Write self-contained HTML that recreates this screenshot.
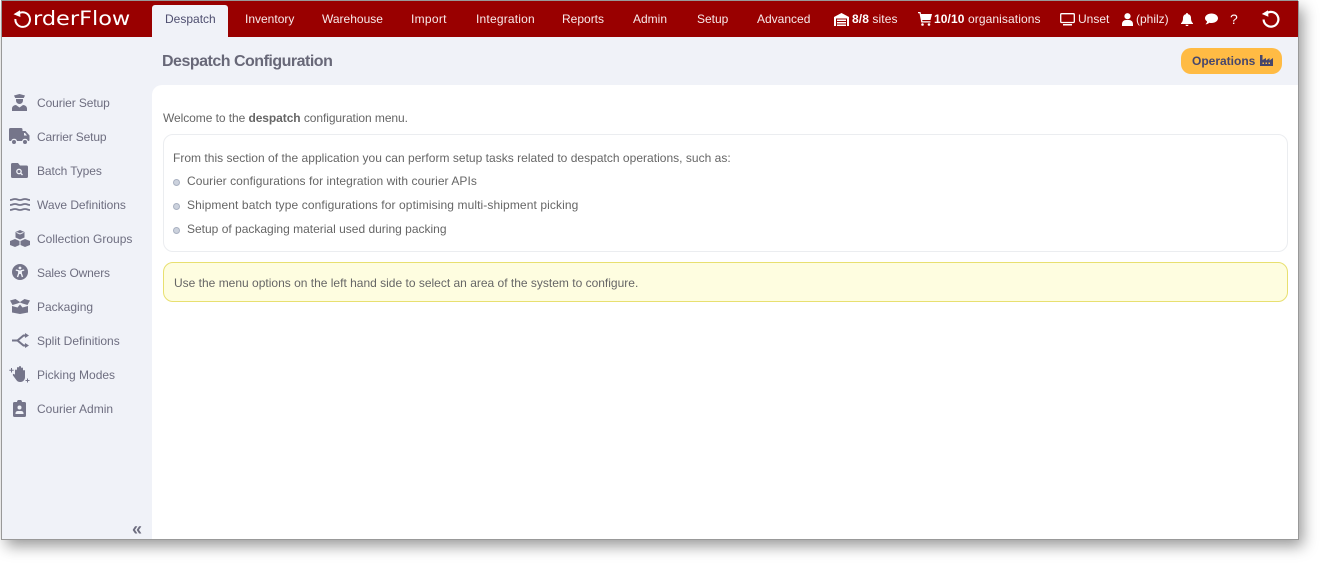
<!DOCTYPE html>
<html>
<head>
<meta charset="utf-8">
<style>
html,body{margin:0;padding:0;width:1324px;height:568px;background:#fff;overflow:hidden;font-family:"Liberation Sans",sans-serif}
#win{position:absolute;left:1px;top:1px;width:1297px;height:538px;background:#f0f2f8;box-shadow:0 -1px 0 0 #999,1px 0 0 0 #999,1px 1px 0 0 #999,0 1px 0 0 #999,5px 7px 14px 0 rgba(0,0,0,.4);overflow:hidden}
#lb{position:absolute;left:0;top:0;width:1px;height:538px;background:#999;z-index:5}
.t{position:absolute;white-space:nowrap;font-size:12px;line-height:16px}
#head{position:absolute;left:0;top:0;width:1297px;height:36px;background:#990000}
.n{color:#f8eaea;top:10px}
#tab{position:absolute;left:151px;top:4px;width:76px;height:32px;background:#f0f2f8;border-radius:3px 3px 0 0}
.s{color:#6e6e80;left:36px}
svg{position:absolute;display:block}
.i{fill:#75758a}
#main{position:absolute;left:151px;top:84px;width:1146px;height:454px;background:#fff;border-radius:10px 0 0 0}
.c{color:#666}
.dot{position:absolute;left:172px;width:5px;height:5px;border-radius:50%;background:#ccd2dd;border:1px solid #a9b1c1;box-sizing:content-box}
</style>
</head>
<body>
<div id="win">
<div id="lb"></div>
<div id="head"></div>
<svg style="left:12px;top:8px" width="20" height="19" viewBox="0 0 20 19"><path d="M5.500 4.600A7.300 7.300 0 1 1 2.400 10" fill="none" stroke="#fff" stroke-width="2"/><path d="M0.500 5.200L7 1.200 7.400 8z" fill="#fff"/></svg>
<div class="t" style="left:32px;top:6px;font-size:19.500px;line-height:24px;color:#fff;font-family:'DejaVu Sans',sans-serif;font-weight:normal;transform-origin:0 0;transform:scaleX(1.150)">rderFlow</div>
<div id="tab"></div>
<div class="t" style="left:164px;top:10px;color:#4f4f70">Despatch</div>
<div class="t n" style="left:244px">Inventory</div>
<div class="t n" style="left:321px">Warehouse</div>
<div class="t n" style="left:410px;letter-spacing:.3px">Import</div>
<div class="t n" style="left:475px;letter-spacing:.2px">Integration</div>
<div class="t n" style="left:561px">Reports</div>
<div class="t n" style="left:632px">Admin</div>
<div class="t n" style="left:696px">Setup</div>
<div class="t n" style="left:756px">Advanced</div>
<svg style="left:833px;top:12px" width="15" height="13" viewBox="0 0 15 13"><path d="M0 4L7.500 0 15 4v9h-2V5.500H2V13H0z" fill="#fff"/><path d="M3 6.500h9V8H3zM3 9h9v1.500H3zM3 11.500h9V13H3z" fill="#fff"/></svg>
<div class="t n" style="left:851px;letter-spacing:.1px"><b style="color:#fff">8/8</b> sites</div>
<svg style="left:917px;top:11px" width="14" height="14" viewBox="0 0 14 14"><path d="M0 0h2.500l.5 2h11l-1.500 6H4.200l.3 1.300H12.500V10.500H3.300L1.500 1.200H0z" fill="#fff"/><circle cx="4.500" cy="12.500" r="1.300" fill="#fff"/><circle cx="11" cy="12.500" r="1.300" fill="#fff"/></svg>
<div class="t n" style="left:933px;letter-spacing:.1px"><b style="color:#fff">10/10</b> organisations</div>
<svg style="left:1059px;top:12px" width="15" height="13" viewBox="0 0 15 13"><rect x=".7" y=".7" width="13.600" height="8.800" rx="1" fill="none" stroke="#fff" stroke-width="1.300"/><rect x="3" y="11" width="9" height="1.500" fill="#fff"/></svg>
<div class="t n" style="left:1077px">Unset</div>
<svg style="left:1121px;top:12px" width="11" height="13" viewBox="0 0 11 13"><circle cx="5.500" cy="3.200" r="3.100" fill="#fff"/><path d="M0 13v-2a4 4 0 0 1 4-4h3a4 4 0 0 1 4 4v2z" fill="#fff"/></svg>
<div class="t n" style="left:1135px">(philz)</div>
<svg style="left:1180px;top:12px" width="12" height="13" viewBox="0 0 12 13"><path d="M6 0a1 1 0 0 1 1 1.100C9 1.500 10 3 10 5c0 3 .8 4 2 5.300V11H0v-.7C1.200 9 2 8 2 5c0-2 1-3.500 3-3.900A1 1 0 0 1 6 0zM4.500 11.700h3A1.500 1.500 0 0 1 4.500 11.700z" fill="#fff"/></svg>
<svg style="left:1204px;top:12px" width="13" height="12" viewBox="0 0 13 12"><path d="M6.500 0.500C10 .5 13 2.500 13 5.300S10 10 6.500 10c-.8 0-1.500-.1-2.200-.3C3.300 10.600 1.800 11.300 0.500 11.300 1.500 10.300 2 9.300 2.100 8.500 .8 7.600 0 6.500 0 5.300 0 2.500 3 .5 6.500 .5z" fill="#fff"/></svg>
<div class="t n" style="left:1229px;top:10px;color:#fff;font-size:14px">?</div>
<svg style="left:1260px;top:8px" width="20" height="20" viewBox="0 0 20 20"><path d="M5.500 4.400A7.400 7.400 0 1 1 2.600 10.500" fill="none" stroke="#fff" stroke-width="2.200"/><path d="M0.800 5L7 1.200 7.400 7.800z" fill="#fff"/></svg>

<div class="t" style="left:161px;top:51px;font-size:16px;line-height:20px;font-weight:bold;color:#686878;letter-spacing:-.5px">Despatch Configuration</div>
<div style="position:absolute;left:1180px;top:47px;width:101px;height:26px;background:#ffbb44;border-radius:10px"></div>
<div class="t" style="left:1191px;top:52px;font-weight:bold;color:#46466c">Operations</div>
<svg style="left:1259px;top:54px" width="13" height="11" viewBox="0 0 13 11"><path d="M0 0h2.500v5L6 3v2.500L9.500 3v2.500L13 3v8H0z" fill="#46466c"/><path d="M2.500 7.500h1.500V9H2.500zM5.500 7.500h1.500V9H5.500zM8.500 7.500h1.500V9H8.500z" fill="#ffbb44"/></svg>

<!-- sidebar -->
<svg style="left:11px;top:93px" width="15" height="17" viewBox="0 0 15 17"><path class="i" d="M2 1.500L7.500 0 13 1.500 11.800 4H3.200z"/><path class="i" d="M4 5h7v1.500a3.500 3.500 0 0 1-7 0z"/><path class="i" d="M0 17v-2.500C0 12.500 2 11 4 11l3.500 2.500L11 11c2 0 4 1.500 4 3.500V17z"/></svg>
<div class="t s" style="top:94px;letter-spacing:-.1px">Courier Setup</div>
<svg style="left:8px;top:127px" width="21" height="17" viewBox="0 0 21 17"><path class="i" d="M1.500 0H12a1.500 1.500 0 0 1 1.500 1.500V3h3l4 4.500V12a1 1 0 0 1-1 1h-.6a3 3 0 0 0-5.800 0H8a3 3 0 0 0-5.800 0H1a1 1 0 0 1-1-1V1.500A1.500 1.500 0 0 1 1.500 0z"/><path d="M15 5h1l2 2.500h-3z" fill="#f0f2f8"/><circle class="i" cx="5" cy="14" r="2"/><circle class="i" cx="16" cy="14" r="2"/></svg>
<div class="t s" style="top:128px;letter-spacing:-.15px">Carrier Setup</div>
<svg style="left:10px;top:162px" width="17" height="15" viewBox="0 0 17 15"><path class="i" d="M1.500 0H7l2 2.500h6.500A1.500 1.500 0 0 1 17 4v9.500a1.500 1.500 0 0 1-1.500 1.500h-14A1.500 1.500 0 0 1 0 13.500v-12A1.500 1.500 0 0 1 1.500 0z"/><circle cx="8" cy="8.500" r="2.200" fill="none" stroke="#f0f2f8" stroke-width="1.300"/><path d="M9.500 10l2 2" stroke="#f0f2f8" stroke-width="1.400"/></svg>
<div class="t s" style="top:162px;letter-spacing:-.1px">Batch Types</div>
<svg style="left:9px;top:197px" width="20" height="14" viewBox="0 0 20 14"><path d="M0 2c2.500 0 2.500-1 5-1s2.500 1 5 1 2.500-1 5-1 2.500 1 5 1M0 7c2.500 0 2.500-1 5-1s2.500 1 5 1 2.500-1 5-1 2.500 1 5 1M0 12c2.500 0 2.500-1 5-1s2.500 1 5 1 2.500-1 5-1 2.500 1 5 1" fill="none" stroke="#75758a" stroke-width="1.800"/></svg>
<div class="t s" style="top:196px;letter-spacing:-.05px">Wave Definitions</div>
<svg style="left:9px;top:229px" width="20" height="17" viewBox="0 0 20 17"><path class="i" d="M10 0l4.500 2v5.500L10 9.500 5.500 7.500V2z"/><path class="i" d="M5 9l4.500 2v4l-4.500 2L0 15v-4zM15 9l5 2v4l-5 2-4.500-2v-4z"/><path d="M6.500 2.400L10 4l3.500-1.600" fill="none" stroke="#f0f2f8"/></svg>
<div class="t s" style="top:230px">Collection Groups</div>
<svg style="left:11px;top:263px" width="16" height="16" viewBox="0 0 16 16"><circle class="i" cx="8" cy="8" r="8"/><circle cx="8" cy="4" r="1.400" fill="#f0f2f8"/><path d="M3.800 6l3 .8v2.500L5.500 13M12.200 6l-3 .8v2.500l1.300 3.700" fill="none" stroke="#f0f2f8" stroke-width="1.400"/><rect x="6.500" y="6.500" width="3" height="3.500" fill="#f0f2f8"/></svg>
<div class="t s" style="top:264px;letter-spacing:-.15px">Sales Owners</div>
<svg style="left:9px;top:298px" width="20" height="15" viewBox="0 0 20 15"><path class="i" d="M0 1.500L5.500 0 10 3 14.500 0 20 1.500 17.500 6 12.500 4.500 10 3.500 7.500 4.500 2.500 6z"/><path class="i" d="M2 7l5.500 1.500L10 5.500l2.500 3L18 7v6.500L10 15l-8-1.500z"/></svg>
<div class="t s" style="top:298px">Packaging</div>
<svg style="left:11px;top:332px" width="17" height="15" viewBox="0 0 17 15"><path d="M0 7.500h5.500L11.500 2.500h3M5.500 7.500l6 5h3" fill="none" stroke="#75758a" stroke-width="2.100"/><path class="i" d="M13 0l4 2.500L13 5zM13 10l4 2.500L13 15z"/></svg>
<div class="t s" style="top:332px">Split Definitions</div>
<svg style="left:8px;top:365px" width="21" height="17" viewBox="0 0 21 17"><path class="i" d="M6 4.500a1 1 0 0 1 2 0V2a1 1 0 0 1 2 0V1a1 1 0 0 1 2 0v1.500a1 1 0 0 1 2 0V5a1 1 0 0 1 2 0v6.500a4.500 4.500 0 0 1-4.500 4.500H11c-1.500 0-2.600-.6-3.500-1.800L4 9.500c-.7-1 .6-2.200 1.500-1.200L6 9z"/><path class="i" d="M2.500 2v4.500M.3 4.200h4.400M18.500 12.500v4M16.500 14.500h4" stroke="#75758a" stroke-width="1"/></svg>
<div class="t s" style="top:366px">Picking Modes</div>
<svg style="left:12px;top:399px" width="13" height="17" viewBox="0 0 13 17"><path class="i" d="M1.500 2H4a2.500 2.500 0 0 1 5 0h2.500A1.500 1.500 0 0 1 13 3.500v12a1.500 1.500 0 0 1-1.500 1.500h-10A1.500 1.500 0 0 1 0 15.500v-12A1.500 1.500 0 0 1 1.500 2z"/><circle cx="6.500" cy="7.500" r="2" fill="#f0f2f8"/><path d="M2.500 14v-1a2.500 2.500 0 0 1 2.500-2h3a2.500 2.500 0 0 1 2.500 2v1z" fill="#f0f2f8"/></svg>
<div class="t s" style="top:400px">Courier Admin</div>
<div class="t" style="left:131px;top:518px;font-size:18px;line-height:20px;font-weight:bold;color:#6e6e80">«</div>

<div id="main"></div>
<div class="t c" style="left:162px;top:109px;letter-spacing:-.07px">Welcome to the <b>despatch</b> configuration menu.</div>
<div style="position:absolute;left:162px;top:133px;width:1123px;height:116px;border:1px solid #ebedf0;border-radius:10px;background:#fff"></div>
<div class="t c" style="left:172px;top:149px;letter-spacing:.02px">From this section of the application you can perform setup tasks related to despatch operations, such as:</div>
<div class="dot" style="top:178px"></div>
<div class="t c" style="left:186px;top:172px;letter-spacing:.055px">Courier configurations for integration with courier APIs</div>
<div class="dot" style="top:202px"></div>
<div class="t c" style="left:186px;top:196px;letter-spacing:.1px">Shipment batch type configurations for optimising multi-shipment picking</div>
<div class="dot" style="top:226px"></div>
<div class="t c" style="left:186px;top:220px">Setup of packaging material used during packing</div>
<div style="position:absolute;left:162px;top:261px;width:1123px;height:38px;border:1px solid #e8e070;border-radius:10px;background:#fefde0"></div>
<div class="t c" style="left:173px;top:274px">Use the menu options on the left hand side to select an area of the system to configure.</div>
</div>
</body>
</html>
